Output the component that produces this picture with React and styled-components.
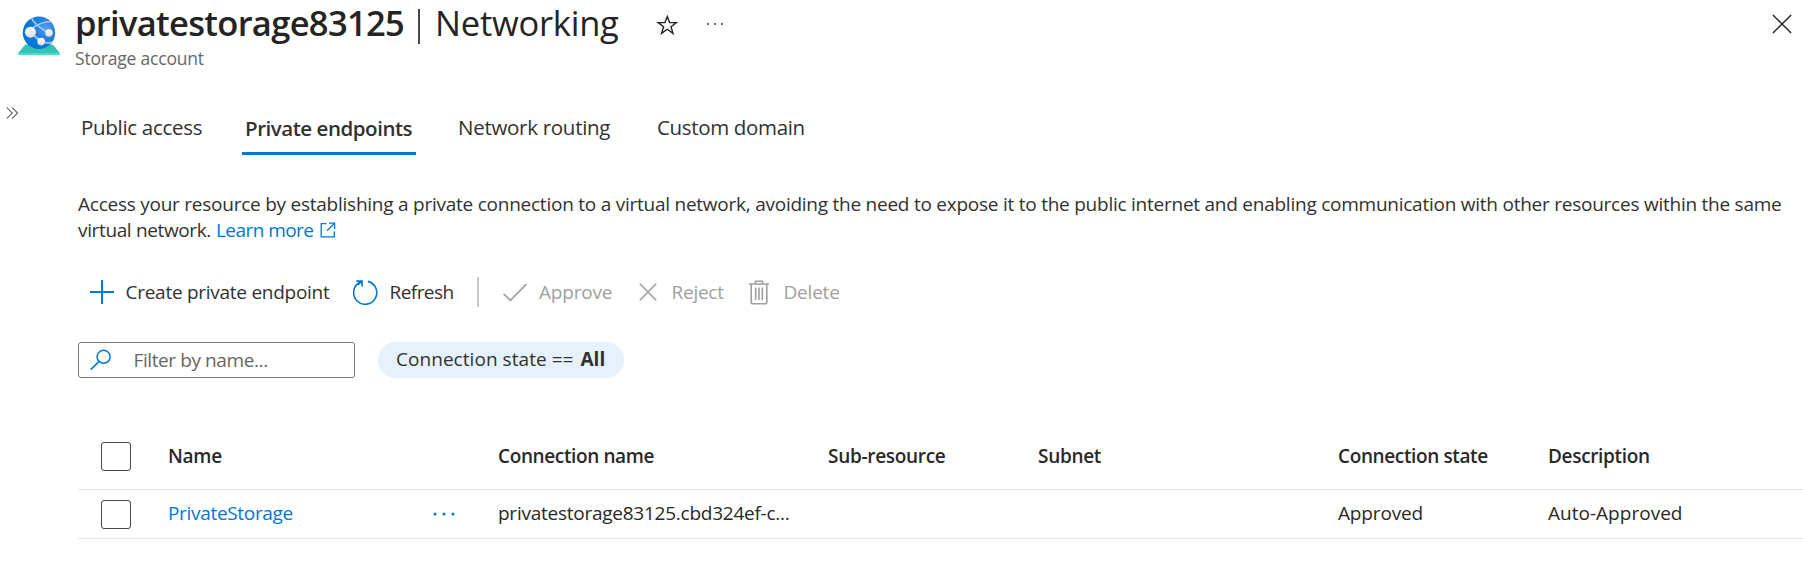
import React from "react";
import styled, { createGlobalStyle } from "styled-components";

const GlobalStyle = createGlobalStyle`
  * { box-sizing: border-box; }
  body {
    margin: 0;
    background: #fff;
    color: #323130;
    font-family: "Open Sans", "Noto Sans", sans-serif;
    font-size: 19px;
  }
`;

const BLUE = "#0078d4";
const MUTED = "#a19f9d";

const Blade = styled.div`
  width: 100%;
  height: 577px;
`;

const Text = styled.span`
  letter-spacing: ${(p) => p.$track || 0}px;
  white-space: nowrap;
`;

/* Header */

const Header = styled.header`
  display: flex;
  height: 106px;
  align-items: flex-start;
`;

const LogoBox = styled.div`
  flex: none;
  width: 75px;
  padding: 16px 0 0 18px;
  svg { display: block; }
`;

const Titles = styled.div`
  flex: none;
  width: 562px;
`;

const Title = styled.h1`
  margin: 0;
  font-size: 34.5px;
  line-height: 45px;
  height: 44px;
  font-weight: 400;
  color: #252423;
  white-space: nowrap;
  strong { font-weight: 600; }
`;

const TitleBar = styled.span`
  display: inline-block;
  width: 2px;
  height: 35px;
  margin: 0 15px 0 14px;
  vertical-align: -8px;
  background: #4a4948;
`;

const Subtitle = styled.div`
  font-size: 17.5px;
  line-height: 29px;
  color: #686664;
`;

const HeaderActions = styled.div`
  flex: 1;
  display: flex;
  justify-content: space-between;
  padding: 14px 11px 0 19px;
  svg { display: block; }
`;

const ActionGroup = styled.div`
  display: flex;
  gap: 28px;
`;

/* Body */

const Body = styled.div`
  display: flex;
`;

const Rail = styled.aside`
  flex: none;
  width: 78px;
  padding: 1px 0 0 6px;
  svg { display: block; }
`;

const Main = styled.main`
  flex: 1;
  min-width: 0;
`;

const Tabs = styled.nav`
  display: flex;
  height: 49px;
`;

const Tab = styled.div`
  width: ${(p) => p.$width}px;
  margin-right: ${(p) => p.$gap}px;
  padding: ${(p) => (p.$active ? 1 : 0)}px 0 0 3px;
  height: 49px;
  border-bottom: 3px solid ${(p) => (p.$active ? BLUE : "transparent")};
  font-size: 20.5px;
  line-height: 42px;
  font-weight: ${(p) => (p.$active ? 600 : 400)};
  white-space: nowrap;
`;

const Intro = styled.p`
  margin: 36px 0 0;
  line-height: 26px;
`;

const IntroLine = styled.span`
  display: flex;
  align-items: center;
  height: 26px;
`;

const Link = styled.a`
  display: inline-flex;
  align-items: center;
  gap: 7px;
  margin-left: ${(p) => p.$indent || 0}px;
  color: ${BLUE};
`;

/* Commands */

const Toolbar = styled.div`
  display: flex;
  align-items: center;
  height: 30px;
  margin-top: 34px;
  padding-left: 12px;
`;

const Command = styled.div`
  display: flex;
  align-items: center;
  width: ${(p) => p.$width}px;
  gap: ${(p) => p.$gap}px;
  line-height: 28px;
  color: ${(p) => (p.$disabled ? MUTED : "inherit")};
  svg { flex: none; display: block; }
`;

const Divider = styled.div`
  width: 2px;
  height: 30px;
  margin-right: 24px;
  background: #c8c6c4;
`;

/* Filters */

const Filters = styled.div`
  display: flex;
  gap: 23px;
  height: 36px;
  margin-top: 35px;
`;

const SearchBox = styled.div`
  display: flex;
  align-items: center;
  gap: 21.5px;
  width: 277px;
  height: 36px;
  padding-left: 11px;
  border: 1px solid #7a7876;
  border-radius: 3px;
  line-height: 34px;
  color: #686664;
  svg { display: block; }
`;

const Pill = styled.div`
  width: 246px;
  height: 36px;
  padding-left: 18px;
  border-radius: 18px;
  background: #e5f1fb;
  line-height: 34px;
  white-space: nowrap;
  b { font-weight: 700; margin-left: 7px; }
`;

/* Table */

const Grid = styled.div`
  margin-top: 46px;
`;

const Row = styled.div`
  display: grid;
  grid-template-columns: 90px 264.5px 65.5px 330px 210px 300px 210px 1fr;
  align-items: center;
  height: ${(p) => (p.$head ? 66 : 49)}px;
  border-bottom: 1px solid #e6e5e4;
  font-weight: ${(p) => (p.$head ? 600 : 400)};
  color: #292827;
`;

const Cell = styled.div`
  padding-bottom: ${(p) => (p.$head ? 1 : 3)}px;
  line-height: 28px;
  white-space: nowrap;
  color: ${(p) => (p.$link ? BLUE : "inherit")};
`;

const Checkbox = styled.div`
  width: 30px;
  height: 29px;
  margin-left: 23px;
  border: 1px solid #494847;
  border-radius: 3px;
`;

const StorageLogo = () => (
  <svg width="42" height="40" viewBox="0 0 42 40" fill="none">
    <defs>
      <radialGradient id="globe" cx=".72" cy=".38" r=".6">
        <stop offset="0" stopColor="#5ea0ef" />
        <stop offset=".45" stopColor="#2c82df" />
        <stop offset="1" stopColor="#0078d4" />
      </radialGradient>
      <linearGradient id="node" x1="0" y1="0" x2="0" y2="1">
        <stop offset="0" stopColor="#fff" />
        <stop offset="1" stopColor="#dcdcdc" />
      </linearGradient>
      <clipPath id="disc"><circle cx="21" cy="16.8" r="16.2" /></clipPath>
    </defs>
    <path d="M7.3 28.6h27.4L42 37.2H0z" fill="#37c2b1" />
    <path d="M0 37h42v1a1 1 0 0 1-1 1H1a1 1 0 0 1-1-1z" fill="#3fe3cd" />
    <circle cx="21" cy="16.8" r="16.2" fill="url(#globe)" />
    <g clipPath="url(#disc)" stroke="#9cc9f1" strokeWidth="1.7">
      <path d="M12.4 14C18 9 26 5.5 34 5.5M13.5 2C16 8 22 12 31 17M12.4 16.5L23 25.5M22.5 25.5C28 27.5 32 27.5 36 25.5" />
    </g>
    <circle cx="12.4" cy="16.2" r="5.5" fill="url(#node)" />
    <circle cx="31" cy="17" r="3.7" fill="url(#node)" />
    <circle cx="23.2" cy="25.6" r="3.8" fill="url(#node)" />
  </svg>
);

const StarIcon = () => (
  <svg width="22" height="22" viewBox="0 0 22 22" fill="none" stroke="#252423" strokeWidth="1.4">
    <path d="M11.3 2.4L13.6 8.6H20.4L15 12.7L17 19.4L11.3 15.3L5.6 19.4L7.6 12.7L2.2 8.6H9z" />
  </svg>
);

const MoreIcon = ({ color = "#252423", r = 0.9, step = 7, size = 18 }) => (
  <svg width={size} height="20" viewBox={`0 0 ${size} 20`} fill={color}>
    {[0, 1, 2].map((i) => <circle key={i} cx={2 + i * step} cy="10" r={r} />)}
  </svg>
);

const CrossIcon = ({ size, color, width }) => (
  <svg width={size} height={size} viewBox="0 0 18 18" fill="none" stroke={color} strokeWidth={width}>
    <path d="M.8.8L17.2 17.2M17.2.8L.8 17.2" />
  </svg>
);

const ExpandIcon = () => (
  <svg width="13" height="12" viewBox="0 0 13 12" fill="none" stroke="#484746" strokeWidth="1.05">
    <path d="M.7.5L6.2 6L.7 11.5M6 .5L11.5 6L6 11.5" />
  </svg>
);

const ExternalIcon = () => (
  <svg width="16" height="16" viewBox="0 0 16 16" fill="none" stroke={BLUE} strokeWidth="1.3">
    <path d="M6.5 1.7H1.2V14.8H14.3V9.5M9 1.2H14.6V7M14.4 1.4L7 8.8" />
  </svg>
);

const PlusIcon = () => (
  <svg width="24" height="24" viewBox="0 0 24 24" stroke={BLUE} strokeWidth="2">
    <path d="M12 0V24M0 12H24" />
  </svg>
);

const RefreshIcon = () => (
  <svg width="25" height="25" viewBox="0 0 25 25" fill="none" stroke={BLUE} strokeWidth="1.6">
    <path d="M15 1.4A11.6 11.6 0 1 1 6.2 2.7L8.8 1.3" />
    <path d="M3.2 1.1H9.1V6.6M8.8 1.3L5 5" />
  </svg>
);

const CheckIcon = () => (
  <svg width="24" height="19" viewBox="0 0 24 19" fill="none" stroke={MUTED} strokeWidth="1.7">
    <path d="M.6 10.8L7.5 17.4L23.4 1.2" />
  </svg>
);

const TrashIcon = () => (
  <svg width="20" height="25" viewBox="0 0 20 25" fill="none" stroke={MUTED} strokeWidth="1.6">
    <path d="M0 4H20M6.4 4V1.8Q6.4 1.2 7 1.2H13Q13.6 1.2 13.6 1.8V4M2.2 4V22Q2.2 23.8 4 23.8H16Q17.8 23.8 17.8 22V4M6.7 7.5V20M10 7.5V20M13.3 7.5V20" />
  </svg>
);

const SearchIcon = () => (
  <svg width="22" height="22" viewBox="0 0 22 22" fill="none" stroke={BLUE} strokeWidth="1.5">
    <circle cx="13.6" cy="7.8" r="6.5" />
    <path d="M9 12.4L.8 20.6" />
  </svg>
);

const tabs = [
  { label: "Public access", width: 128, gap: 36, track: -0.3 },
  { label: "Private endpoints", width: 174, gap: 39, track: -0.46, active: true },
  { label: "Network routing", width: 160, gap: 39, track: -0.28 },
  { label: "Custom domain", width: 154, gap: 0, track: -0.34 },
];

export default function App() {
  return (
    <Blade>
      <GlobalStyle />
      <Header>
        <LogoBox><StorageLogo /></LogoBox>
        <Titles>
          <Title>
            <Text as="strong" $track={-0.68}>privatestorage83125</Text>
            <TitleBar />
            <Text $track={-0.25}>Networking</Text>
          </Title>
          <Subtitle><Text $track={-0.2}>Storage account</Text></Subtitle>
        </Titles>
        <HeaderActions>
          <ActionGroup>
            <StarIcon />
            <MoreIcon />
          </ActionGroup>
          <CrossIcon size={20} color="#252423" width={1.3} />
        </HeaderActions>
      </Header>
      <Body>
        <Rail><ExpandIcon /></Rail>
        <Main>
          <Tabs>
            {tabs.map((t) => (
              <Tab key={t.label} $width={t.width} $gap={t.gap} $active={t.active}>
                <Text $track={t.track}>{t.label}</Text>
              </Tab>
            ))}
          </Tabs>
          <Intro>
            <IntroLine>
              <Text $track={-0.243}>
                Access your resource by establishing a private connection to a virtual network, avoiding the need to
                expose it to the public internet and enabling communication with other resources within the same
              </Text>
            </IntroLine>
            <IntroLine>
              <Text $track={-0.36}>virtual network.</Text>
              <Link $indent={5}>
                <Text $track={-0.55}>Learn more</Text>
                <ExternalIcon />
              </Link>
            </IntroLine>
          </Intro>
          <Toolbar>
            <Command $width={263} $gap={11.5}><PlusIcon /><Text $track={-0.27}>Create private endpoint</Text></Command>
            <Command $width={124} $gap={11.5}><RefreshIcon /><Text $track={-0.55}>Refresh</Text></Command>
            <Divider />
            <Command $disabled $width={136} $gap={12}><CheckIcon /><Text $track={-0.2}>Approve</Text></Command>
            <Command $disabled $width={110} $gap={14.5}>
              <CrossIcon size={18} color={MUTED} width={1.6} />
              <Text $track={-0.25}>Reject</Text>
            </Command>
            <Command $disabled $width={100} $gap={14.5}><TrashIcon /><Text $track={-0.2}>Delete</Text></Command>
          </Toolbar>
          <Filters>
            <SearchBox><SearchIcon /><Text $track={-0.4}>Filter by name...</Text></SearchBox>
            <Pill><Text $track={0.05}>Connection state ==</Text><b>All</b></Pill>
          </Filters>
          <Grid>
            <Row $head>
              <Checkbox />
              <Cell $head><Text $track={-0.3}>Name</Text></Cell>
              <Cell $head />
              <Cell $head><Text $track={-0.38}>Connection name</Text></Cell>
              <Cell $head><Text $track={-0.3}>Sub-resource</Text></Cell>
              <Cell $head><Text $track={-0.3}>Subnet</Text></Cell>
              <Cell $head><Text $track={-0.38}>Connection state</Text></Cell>
              <Cell $head><Text $track={-0.33}>Description</Text></Cell>
            </Row>
            <Row>
              <Checkbox />
              <Cell $link><Text $track={-0.32}>PrivateStorage</Text></Cell>
              <MoreIcon color={BLUE} r={1.5} step={9} size={24} />
              <Cell><Text $track={-0.25}>privatestorage83125.cbd324ef-c...</Text></Cell>
              <Cell />
              <Cell />
              <Cell><Text $track={-0.15}>Approved</Text></Cell>
              <Cell><Text $track={0.02}>Auto-Approved</Text></Cell>
            </Row>
          </Grid>
        </Main>
      </Body>
    </Blade>
  );
}
